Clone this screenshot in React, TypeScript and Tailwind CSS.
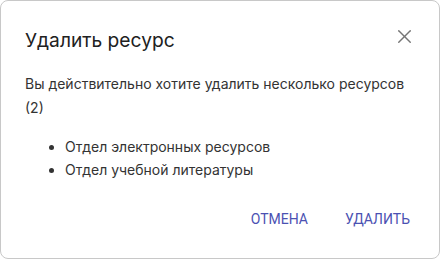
import { X } from "lucide-react";

const items = ["Отдел электронных ресурсов", "Отдел учебной литературы"];

const App = () => {
  return (
    <div className="w-[440px] h-[259px] bg-white" style={{ fontFamily: "Inter, 'Noto Sans', sans-serif" }}>
      <div className="h-full flex flex-col rounded-lg border border-[#c8c8c8] bg-white text-[#212121]">
        {/* Header */}
        <div className="flex items-start justify-between pl-6 pr-[23px] pt-[23px]">
          <h2 className="mt-[4px] text-[19.2px] leading-[24px] font-normal">Удалить ресурс</h2>
          <button className="w-6 h-6 flex items-center justify-center text-[#757575]">
            <X className="w-[23px] h-[23px]" strokeWidth={1.45} />
          </button>
        </div>

        {/* Body */}
        <div className="px-6 pt-[20px] text-[14px] leading-[24px] text-[#333]">
          <p>Вы действительно хотите удалить несколько ресурсов (2)</p>
          <ul className="mt-[15px] pl-[40px] list-disc leading-[23px]">
            {items.map((item) => (
              <li key={item}>{item}</li>
            ))}
          </ul>
        </div>

        {/* Actions */}
        <div className="mt-auto flex justify-end gap-[37px] pr-[29px] pb-[28px] text-[14px] text-[#4b51b2] font-['Roboto',sans-serif]">
          <button className="uppercase">Отмена</button>
          <button className="uppercase">Удалить</button>
        </div>
      </div>
    </div>
  );
};

export default App;
